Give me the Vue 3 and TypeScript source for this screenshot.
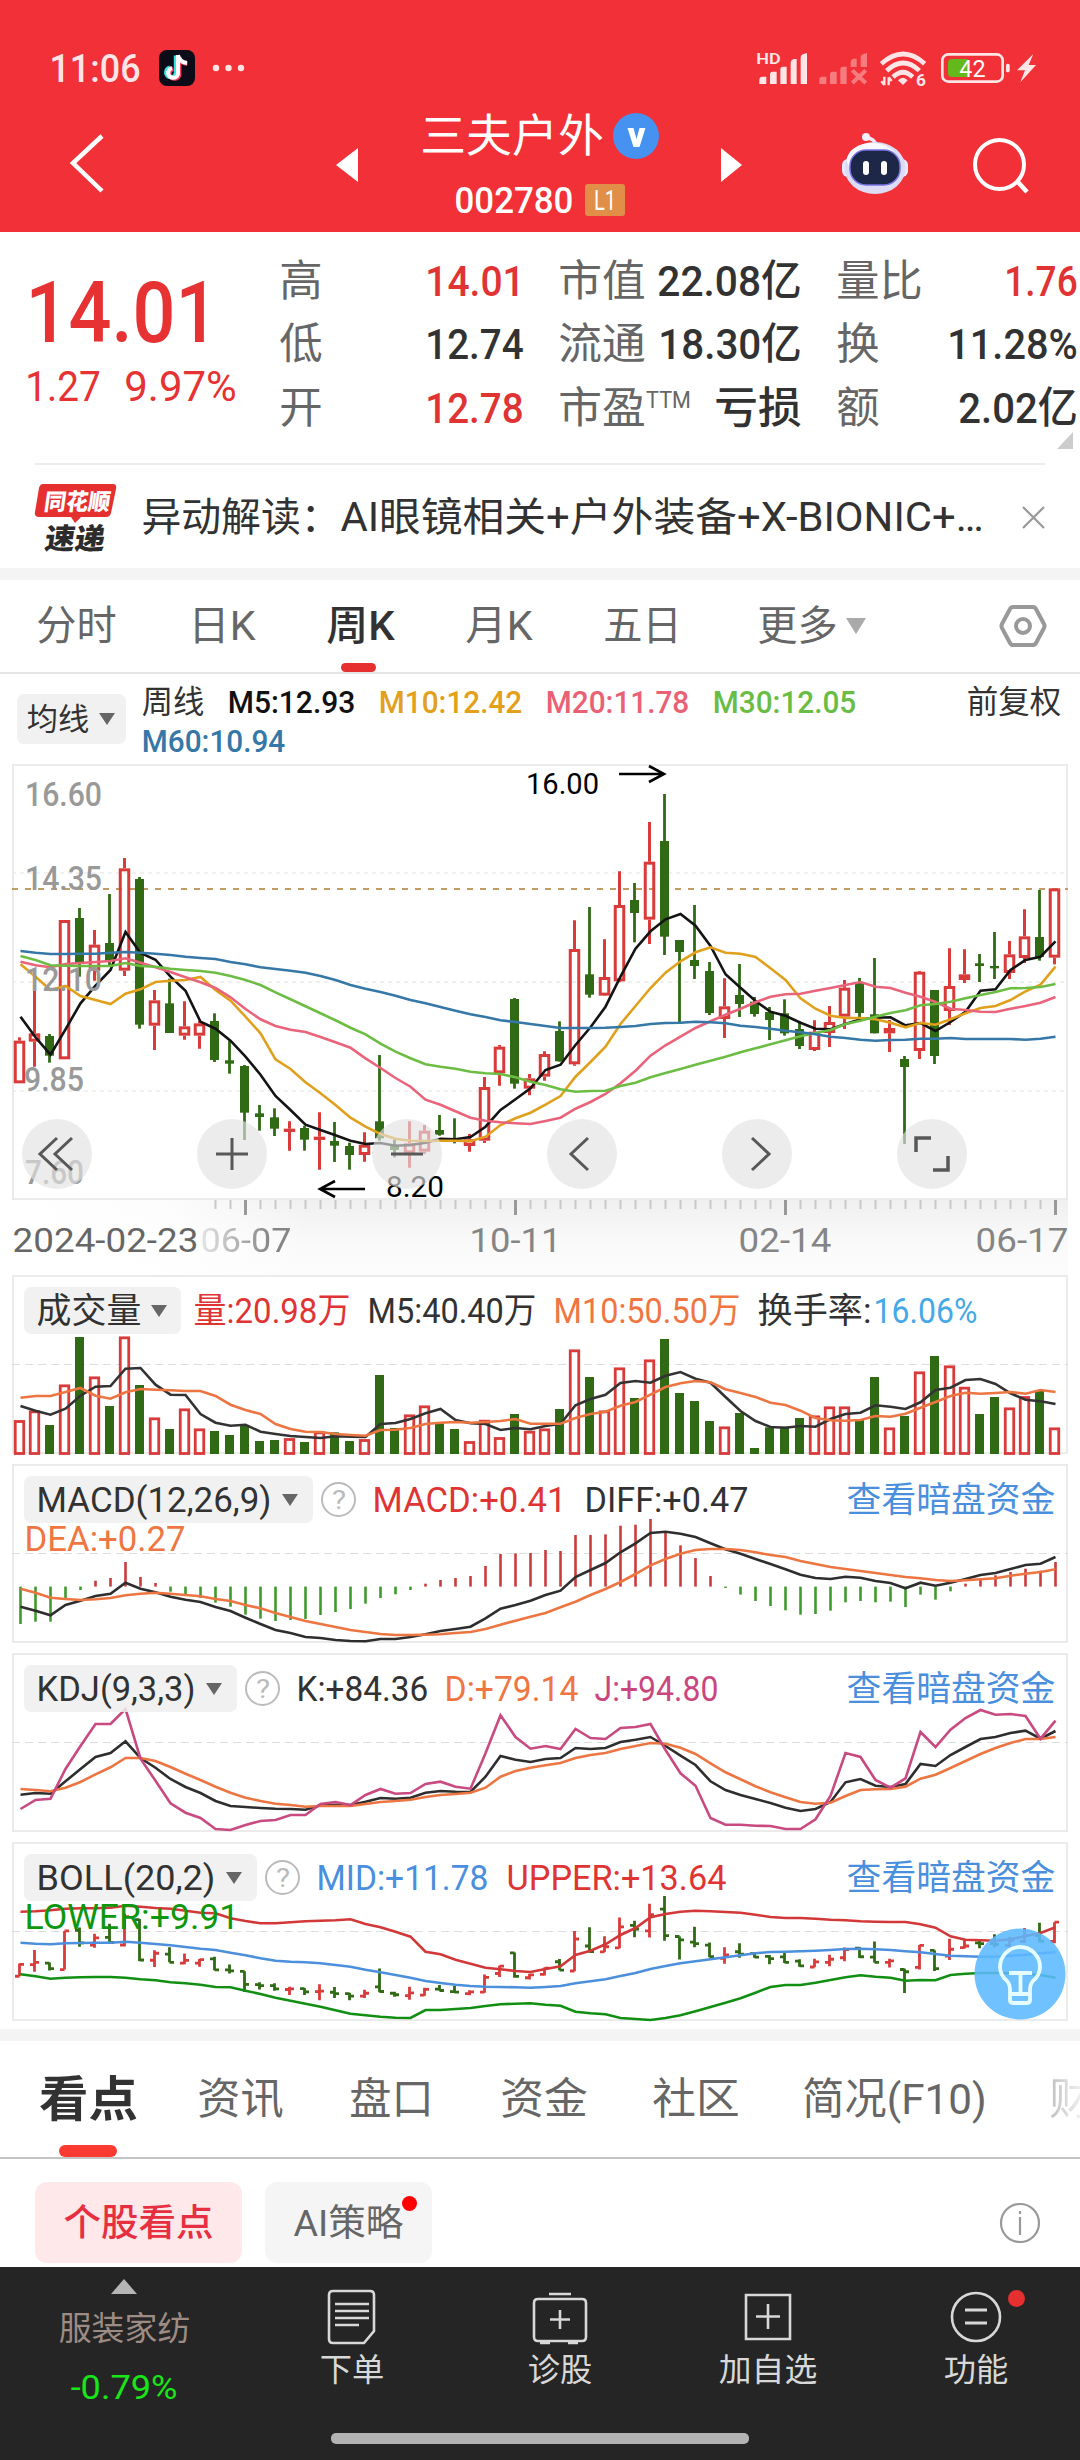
<script setup lang="ts">
import { h } from 'vue'
import type { FunctionalComponent } from 'vue'

interface FitProps { t: string; w: number; s: number; lead?: number; ht?: number }

// One line of text, condensed or widened to a given width; `lead` is the gap before it.
const Fit: FunctionalComponent<FitProps> = (p) => {
  const lead = p.lead ?? 0
  const ht = p.ht ?? 48
  const pad = p.s * 0.04
  return h('svg', { width: lead + p.w, height: ht, class: 'fit' }, [
    h('text', {
      x: lead - pad, y: ht / 2 + p.s * 0.348, 'font-size': p.s,
      textLength: p.w + pad * 2, lengthAdjust: 'spacingAndGlyphs', fill: 'currentColor',
    }, p.t),
  ])
}
Fit.props = ['t', 'w', 's', 'lead', 'ht'] as any

type Item = [string, number, number, number, string]
// Turns left edges and right edges into a run of items with leading gaps.
function row(start: number, items: Item[]) {
  let at = start
  return items.map(([t, x1, x2, s, c]) => {
    const o = { t, lead: x1 - at, w: x2 - x1, s, class: c }
    at = x2
    return o
  })
}

const quoteRows: Item[][] = [
  [['高', 281, 321, 43, 'lbl'], ['14.01', 427, 523, 43, 'up m'], ['市值', 560, 644, 43, 'lbl'], ['22.08亿', 659, 800, 43, 'ink m'], ['量比', 838, 921, 43, 'lbl'], ['1.76', 1006, 1076, 43, 'up m']],
  [['低', 281, 321, 43, 'lbl'], ['12.74', 427, 522, 43, 'ink m'], ['流通', 560, 644, 43, 'lbl'], ['18.30亿', 660, 800, 43, 'ink m'], ['换', 838, 878, 43, 'lbl'], ['11.28%', 949, 1076, 43, 'ink m']],
  [['开', 281, 321, 43, 'lbl'], ['12.78', 427, 522, 43, 'up m'], ['市盈', 560, 644, 43, 'lbl'], ['TTM', 647, 690, 23, 'lbl sup'], ['亏损', 716, 800, 43, 'ink m'], ['额', 838, 878, 43, 'lbl'], ['2.02亿', 960, 1076, 43, 'ink m']],
]
const periodTabs = row(0, [
  ['分时', 38, 115, 41, 'lbl'], ['日K', 190, 254, 41, 'lbl'], ['周K', 328, 393, 41, 'ink b'], ['月K', 467, 531, 41, 'lbl'],
  ['五日', 605, 680, 41, 'lbl'], ['更多', 759, 836, 41, 'lbl'],
])
const maRow = row(126, [
  ['周线', 143, 203, 32, 'ink'], ['M5:12.93', 229, 354, 32, 'black m'], ['M10:12.42', 380, 521, 32, 'gold m'],
  ['M20:11.78', 547, 688, 32, 'pink m'], ['M30:12.05', 714, 855, 32, 'lime m'], ['前复权', 968, 1060, 32, 'ink'],
])
const volRow = row(181, [
  ['量:20.98万', 195, 349, 35, 'up'], ['M5:40.40万', 369, 535, 35, 'ink'], ['M10:50.50万', 555, 739, 35, 'org'],
  ['换手率:', 759, 870, 35, 'ink'], ['16.06%', 875, 976, 35, 'sky'],
])
const macdRow = row(356, [['MACD:+0.41', 374, 565, 35, 'up'], ['DIFF:+0.47', 586, 747, 35, 'ink'], ['查看暗盘资金', 848, 1054, 35, 'link']])
const kdjRow = row(280, [['K:+84.36', 298, 427, 35, 'ink'], ['D:+79.14', 446, 577, 35, 'org'], ['J:+94.80', 596, 717, 35, 'mag'], ['查看暗盘资金', 848, 1054, 35, 'link']])
const bollRow = row(300, [['MID:+11.78', 318, 487, 35, 'blu'], ['UPPER:+13.64', 508, 725, 35, 'up'], ['查看暗盘资金', 848, 1054, 35, 'link']])
const infoTabs = row(0, [
  ['看点', 41, 136, 48, 'ink bb'], ['资讯', 199, 282, 43, 'lbl'], ['盘口', 351, 432, 43, 'lbl'], ['资金', 502, 586, 43, 'lbl'],
  ['社区', 654, 738, 43, 'lbl'], ['简况(F10)', 804, 985, 43, 'lbl'], ['财', 1051, 1091, 43, 'lbl fade'],
])
const dates = row(12, [
  ['2024-02-23', 14, 197, 34, 'day1'], ['06-07', 202, 290, 34, 'day dim'], ['10-11', 471, 560, 34, 'day'],
  ['02-14', 740, 830, 34, 'day'], ['06-17', 977, 1067, 34, 'day'],
])

// Vertical chart data is held in thirds of a pixel.
const X = (i: number) => 7.5 + 15 * i
const line = (a: number[], top: number) => a.map((v, i) => `${X(i) + 1},${((v - top) / 3).toFixed(1)}`).join(' ')

// high, low, body top, body bottom, volume top; a leading 1 marks a rising week
const raw: number[][] = [
  [1, 862, 1000, 872, 1000, 480], [1, 716, 950, 850, 875, 451], [0, 852, 938, 858, 917, 495], [1, 510, 928, 510, 928, 373], [0, 474, 680, 504, 640, 231],
  [1, 540, 692, 584, 662, 349], [0, 432, 650, 579, 635, 438], [1, 324, 678, 355, 662, 229], [0, 381, 836, 387, 824, 375], [1, 720, 900, 751, 827, 472],
  [0, 686, 849, 760, 849, 507], [1, 754, 869, 829, 857, 445], [1, 812, 896, 820, 857, 505], [0, 790, 936, 813, 930, 513], [0, 873, 971, 931, 941, 525],
  [0, 945, 1170, 948, 1088, 495], [0, 1065, 1142, 1090, 1101, 543], [0, 1075, 1158, 1102, 1136, 540], [1, 1114, 1202, 1136, 1143, 534], [0, 1127, 1202, 1134, 1169, 546],
  [1, 1087, 1259, 1160, 1167, 514], [0, 1116, 1236, 1173, 1187, 517], [0, 1178, 1259, 1188, 1215, 543], [1, 1147, 1235, 1184, 1215, 537], [0, 915, 1172, 1114, 1165, 345],
  [0, 1168, 1222, 1184, 1200, 504], [1, 1114, 1253, 1180, 1210, 463], [1, 1125, 1211, 1142, 1205, 436], [0, 1095, 1157, 1140, 1154, 490], [0, 1105, 1180, 1166, 1172, 507],
  [1, 1152, 1205, 1168, 1188, 543], [1, 981, 1179, 1011, 1172, 479], [1, 885, 1007, 890, 970, 531], [0, 744, 1016, 747, 1001, 462], [1, 972, 1036, 985, 1016, 512],
  [1, 904, 992, 912, 980, 505], [0, 814, 935, 843, 934, 447], [1, 511, 947, 597, 943, 268], [0, 471, 743, 673, 734, 351], [1, 568, 738, 681, 737, 451],
  [1, 364, 697, 465, 694, 322], [0, 399, 577, 450, 489, 414], [1, 216, 582, 335, 509, 298], [0, 132, 615, 273, 560, 237], [0, 570, 820, 570, 606, 399],
  [0, 465, 687, 630, 648, 423], [0, 636, 795, 663, 789, 483], [1, 685, 864, 769, 807, 499], [0, 642, 801, 735, 762, 459], [0, 741, 800, 755, 792, 564],
  [0, 771, 870, 786, 810, 502], [0, 748, 857, 790, 850, 500], [0, 815, 897, 837, 888, 474], [1, 811, 903, 845, 900, 466], [1, 768, 891, 816, 849, 439],
  [1, 690, 837, 713, 800, 439], [0, 684, 802, 697, 789, 480], [0, 624, 850, 793, 850, 351], [1, 810, 906, 834, 850, 502], [0, 918, 1182, 927, 951, 468],
  [1, 663, 927, 665, 903, 334], [0, 720, 942, 720, 918, 288], [1, 595, 825, 708, 783, 316], [1, 598, 699, 673, 690, 380], [0, 612, 696, 640, 648, 462],
  [0, 546, 687, 648, 655, 411], [1, 573, 687, 613, 669, 442], [1, 478, 639, 559, 624, 408], [0, 420, 632, 561, 621, 392], [1, 415, 643, 415, 623, 502],
]
const T = 42
const bars = raw.map(([u, hi, lo, a, b, v], i) => {
  const x = X(i)
  const B = (q: number) => ((768 + (q - 132) * 0.2774 - 606) / 3)
  const o = u ? b : a
  const c = u ? a : b
  return {
    x, up: !!u, hi: (hi - T) / 3, lo: (lo - T) / 3, a: (a - T) / 3, b: (b - T) / 3, v: (v - 45) / 3,
    ohlc: `M${x} ${B(hi)}V${B(lo)}M${x - 4.5} ${B(o)}H${x}M${x} ${B(c)}H${x + 4.5}`,
  }
})
const ma5 = [800,862,914,838,760,707,660,546,609,629,680,722,815,836,872,920,974,1038,1080,1124,1140,1156,1172,1182,1179,1187,1185,1178,1166,1168,1161,1130,1080,1048,1015,960,944,885,832,770,680,596,544,508,492,527,588,673,713,753,785,797,818,836,838,822,808,803,802,826,819,843,816,785,722,718,660,630,620,574]
const ma10 = [643,680,720,708,738,750,762,731,718,696,692,690,681,720,752,800,850,928,957,997,1030,1065,1103,1130,1152,1166,1172,1173,1172,1172,1174,1160,1125,1105,1088,1064,1038,980,936,890,822,768,714,668,634,607,592,608,611,621,655,690,745,776,797,804,804,808,818,832,819,824,808,790,774,768,750,724,704,650]
const ma20 = [635,646,652,642,639,636,633,625,638,652,666,682,697,714,742,777,808,828,839,846,861,877,893,925,954,984,1010,1049,1064,1084,1103,1112,1117,1120,1122,1113,1103,1076,1056,1032,1000,962,917,886,860,834,814,794,776,757,740,733,731,722,714,705,696,710,714,728,740,756,776,780,785,786,776,768,758,741]
const ma30 = [618,630,646,647,648,648,648,639,648,650,656,660,663,668,678,690,705,727,748,769,790,811,833,853,881,905,925,943,950,956,965,970,972,982,995,1005,1018,1025,1023,1022,1008,998,982,969,957,944,932,920,907,895,883,871,859,849,840,822,812,800,789,781,766,762,755,745,735,726,715,714,711,702]
const ma60 = [603,608,612,612,611,611,608,606,608,611,615,620,624,627,636,643,652,657,662,668,678,690,705,716,726,737,750,760,771,782,793,801,811,816,822,828,834,834,834,833,831,828,822,819,818,815,817,820,827,831,836,842,847,853,860,864,869,872,870,869,866,866,864,867,867,867,867,869,866,860]
const v5 = [438,452,464,446,407,380,378,326,324,374,404,405,462,488,497,494,515,522,528,531,534,529,530,531,492,489,477,460,447,480,490,492,510,504,508,498,491,436,417,404,369,363,368,347,336,356,368,411,453,483,501,503,498,500,477,462,458,436,440,447,427,390,383,360,357,372,400,419,424,432]
const v10 = [413,408,408,396,384,407,416,397,387,389,391,393,393,408,434,450,462,492,507,515,516,522,525,527,510,509,504,492,488,486,488,486,483,477,491,491,491,474,462,455,437,426,404,381,370,363,367,388,399,411,428,435,452,474,481,482,480,468,470,461,443,426,408,398,401,399,396,401,390,396]
const macd = [1092,1085,1085,1014,990,962,954,906,951,969,995,1006,1014,1028,1040,1064,1076,1083,1080,1077,1065,1056,1047,1031,1014,1003,990,971,960,954,948,918,882,880,879,870,873,825,825,823,797,794,777,817,856,894,948,984,1004,1023,1038,1051,1064,1062,1052,1027,1023,1027,1025,1041,1004,1019,994,971,958,946,936,926,932,906]
const diff = [1040,1052,1066,1035,1022,1008,1001,968,986,997,1010,1019,1026,1041,1053,1073,1092,1110,1119,1131,1134,1140,1143,1144,1137,1137,1131,1123,1113,1107,1100,1075,1046,1035,1022,1005,992,951,930,909,877,850,819,815,821,831,850,868,881,897,912,928,944,954,957,950,953,963,969,985,968,977,968,957,945,939,927,915,911,891]
const dea = [986,998,1013,1017,1020,1018,1014,1006,1001,998,1001,1005,1009,1017,1023,1035,1045,1059,1071,1083,1092,1101,1110,1116,1122,1125,1125,1124,1123,1119,1116,1107,1094,1082,1070,1059,1042,1025,1005,987,966,942,916,897,881,870,867,867,870,877,885,891,903,912,921,927,933,939,945,951,955,960,963,961,958,955,947,941,936,928]
const kk = [464,459,461,424,387,351,339,304,354,383,417,441,459,483,498,501,504,506,507,509,496,494,495,485,474,476,473,458,453,455,456,410,348,359,366,357,354,324,327,324,306,299,291,318,347,375,424,450,465,477,489,503,513,507,486,427,417,437,441,432,372,378,345,321,297,291,279,272,296,273]
const kd = [447,450,454,443,426,403,382,354,354,363,381,401,420,440,458,473,483,491,495,500,498,498,498,492,486,483,479,471,465,462,458,443,410,393,383,376,369,354,345,339,327,318,309,311,323,342,370,397,418,439,457,472,486,491,488,468,450,448,447,440,416,404,384,363,342,324,309,297,297,291]
const kj = [507,480,476,387,318,252,252,207,356,422,490,518,534,567,570,555,543,540,525,525,492,486,495,465,447,461,459,432,425,440,446,340,226,291,326,318,327,267,294,297,264,261,252,330,400,437,534,554,554,557,558,567,567,538,468,339,351,420,443,415,276,321,269,234,210,224,222,228,296,242]
const bm = [908,911,913,910,909,908,908,905,908,912,916,921,926,930,938,946,955,962,965,967,970,975,980,989,997,1005,1013,1023,1029,1034,1038,1040,1041,1042,1043,1041,1038,1030,1024,1018,1008,999,987,978,970,964,958,952,946,940,936,935,934,932,930,927,926,928,930,934,937,942,947,949,950,950,947,944,940,937]
const bu = [815,814,811,806,805,805,803,797,800,804,806,812,818,820,835,843,850,850,847,844,842,841,838,852,862,875,890,935,943,959,971,983,988,993,996,987,979,945,932,913,885,864,832,822,815,812,814,816,818,824,831,834,834,836,839,841,844,845,846,846,853,863,889,899,901,902,898,888,879,862]
const bl = [1003,1009,1016,1013,1012,1011,1011,1013,1018,1021,1027,1030,1034,1041,1042,1052,1062,1073,1082,1091,1100,1111,1121,1126,1130,1133,1134,1110,1110,1107,1104,1098,1093,1091,1090,1094,1097,1115,1120,1123,1134,1137,1140,1134,1126,1114,1101,1088,1075,1058,1041,1035,1035,1028,1020,1012,1006,1010,1013,1022,1020,1021,1005,1001,999,999,1000,1002,1005,1013]

const maLines = [
  { p: line(ma5, T), c: '#141414' }, { p: line(ma10, T), c: '#e0a01c' }, { p: line(ma20, T), c: '#e9637a' },
  { p: line(ma30, T), c: '#6dbd45' }, { p: line(ma60, T), c: '#3577a6' },
]
const ticks = raw.map((_, i) => i).filter((i) => i > 12)
const RED = '#d93a3a'
const GREEN = '#306a14'
</script>

<template>
  <div class="page">
    <header class="top">
      <div class="status">
        <Fit t="11:06" :w="88" :s="39" :lead="51" class="clock m" />
        <svg class="tok" width="36" height="36" viewBox="0 0 36 36">
          <rect width="36" height="36" rx="8" fill="#0c0c18" />
          <g fill="none" stroke-width="4">
            <path d="M18 6V24a5 5 0 1 1-6-6M18 6q1 6 8 7" stroke="#35e3df" transform="translate(-1.2 -.6)" />
            <path d="M19 6V24a5 5 0 1 1-6-6M19 6q1 6 8 7" stroke="#f5385c" transform="translate(1.4 1)" />
            <path d="M19 5V24a5 5 0 1 1-6-6M19 5q1 7 9 8" stroke="#fff" />
          </g>
        </svg>
        <svg width="36" height="36"><g fill="#ffe3e3"><circle cx="8" cy="18" r="3.200" /><circle cx="20.500" cy="18" r="3.200" /><circle cx="33" cy="18" r="3.200" /></g></svg>
        <svg class="sys" width="304" height="56" viewBox="0 0 912 168">
          <g fill="#ffe6e6">
            <text x="49" y="71" font-size="45" font-weight="600" textLength="73" lengthAdjust="spacingAndGlyphs">HD</text>
            <path d="M58 119a9 9 0 0 1 9-9h12v22H58zM90 103q0-8 8-8h12v37H90zM121 88q0-8 8-8h11v52h-19zM152 69q0-9 9-12h9v75h-18zM182 54q0-10 9-12l10-3v93h-19z" />
            <g opacity=".42">
              <path d="M238 119a9 9 0 0 1 9-9h12v22h-21zM270 103q0-8 8-8h12v37h-20zM301 88q0-8 8-8h11v52h-19zM332 66q0-8 8-10h10v25h-18zM362 52q0-8 9-10l10-3v42h-19z" />
              <path d="M337 91l40 38M377 91l-40 38" stroke="#ffe6e6" stroke-width="12" />
            </g>
            <g fill="none" stroke="#ffe6e6" stroke-width="14">
              <path d="M424 71Q490 13 554 71" /><path d="M440 92Q490 46 538 92" /><path d="M459 111Q489 82 518 111" />
            </g>
            <path d="M474 121q15-16 29 0l-14 14z" />
            <path d="M433 110v26M446 112v24M424 124l9 11M455 123l-9-11" fill="none" stroke="#ffe6e6" stroke-width="7" />
            <text x="528" y="138" font-size="52" font-weight="700">6</text>
            <rect x="607" y="43" width="181" height="82" rx="18" fill="none" stroke="#ffe6e6" stroke-width="8" />
            <path d="M636 57h46v54h-46q-12 0-12-12V69q0-12 12-12z" fill="#63b81b" />
            <text x="658" y="110" font-size="70" textLength="79" lengthAdjust="spacingAndGlyphs" fill="#fff">42</text>
            <rect x="798" y="71" width="11" height="26" rx="5" />
            <path d="M880 42l-49 49h24l-14 36 47-52h-22z" />
          </g>
        </svg>
      </div>
      <div class="nav">
        <svg width="400" height="128" viewBox="0 104 400 128">
          <path d="M102 136L73 163l29 28" fill="none" stroke="#fff" stroke-width="4.500" />
          <path d="M336 165l22-17v34z" fill="#fff" />
        </svg>
        <div class="name">
          <div class="line">
            <Fit t="三夫户外" :w="180" :s="45" :lead="22" :ht="64" />
            <svg class="vip" width="46" height="46" viewBox="0 0 46 46"><circle cx="23" cy="23" r="23" fill="#4592f0" /><path d="M14.500 15h6l3 11 3-11h6l-6 19h-6z" fill="#fff" /></svg>
          </div>
          <div class="line">
            <Fit t="002780" :w="116" :s="36" :lead="56" :ht="64" class="m" />
            <span class="lvl"><Fit t="L1" :w="20" :s="28" :ht="32" /></span>
          </div>
        </div>
        <svg width="390" height="128" viewBox="690 104 390 128">
          <path d="M742 165l-21-17v34z" fill="#fff" />
          <path d="M866 138q9 0 10 8" fill="none" stroke="#f5e9f8" stroke-width="3.500" /><circle cx="866" cy="137" r="4" fill="#f7effa" />
          <rect x="842" y="159" width="66" height="18" rx="6" fill="#efeaff" />
          <ellipse cx="875" cy="168" rx="30.500" ry="26" fill="#dddcf7" />
          <ellipse cx="872" cy="160" rx="25" ry="17" fill="#faf8ff" />
          <rect x="850" y="150" width="50" height="35" rx="16" fill="#1d2849" stroke="#7772e4" stroke-width="1.500" />
          <rect x="863" y="161" width="6" height="14" rx="3" fill="#fff" /><rect x="881" y="161" width="6" height="14" rx="3" fill="#fff" />
          <circle cx="999.500" cy="164.500" r="24.500" fill="none" stroke="#fff" stroke-width="4" />
          <path d="M1017 181l10 11" stroke="#fff" stroke-width="4.500" />
        </svg>
      </div>
    </header>

    <section class="quote">
      <div class="price">
        <Fit t="14.01" :w="186" :s="86" :lead="29" :ht="110" class="m" />
        <div class="line"><Fit t="1.27" :w="72" :s="43" :lead="27" :ht="38" /><Fit t="9.97%" :w="109" :s="43" :lead="27" :ht="38" /></div>
      </div>
      <div class="facts">
        <div v-for="(r, n) in quoteRows" :key="n" class="fact"><Fit v-for="it in row(260, r)" :key="it.t" v-bind="it" /></div>
      </div>
      <svg class="corner" width="16" height="17"><path d="M16 0v17H0z" fill="#ccc" /></svg>
    </section>
    <section class="news">
      <svg width="82" height="68" viewBox="0 0 82 68">
        <path d="M8 1h70q4 0 3 5l-5 24q-1 4-5 4H46l-6 6-4-6H4q-5 0-4-5L4 5q1-4 4-4z" fill="#e63030" />
        <g transform="skewX(-8)" font-weight="900">
          <text x="12" y="27" font-size="23" textLength="66" lengthAdjust="spacingAndGlyphs" fill="#fff">同花顺</text>
          <text x="18" y="66" font-size="29" textLength="60" lengthAdjust="spacingAndGlyphs" fill="#2c2c2c">速递</text>
        </g>
      </svg>
      <Fit t="异动解读：" :w="196" :s="40" :lead="26" :ht="62" class="ink" />
      <Fit t="AI眼镜相关+户外装备+X-BIONIC+…" :w="640" :s="40" :lead="3" :ht="62" class="ink" />
      <svg width="62" height="30"><path d="M41 5l21 21M62 5L41 26" stroke="#999" stroke-width="2.200" /></svg>
    </section>
    <div class="band"></div>

    <nav class="periods">
      <Fit v-for="it in periodTabs" :key="it.t" v-bind="it" />
      <svg width="40" height="24"><path d="M10 4h20l-10 16z" fill="#aaa" /></svg>
      <svg class="hex" width="46" height="46" viewBox="0 0 46 46" fill="none" stroke="#999" stroke-width="4"><path d="M13 4h20q2 0 3 2l8 15q1 2 0 4l-8 15q-1 2-3 2H13q-2 0-3-2L2 25q-1-2 0-4l8-15q1-2 3-2z" /><circle cx="23" cy="23" r="7" /></svg>
      <i class="mark"></i>
    </nav>

    <div class="averages">
      <span class="chip pick"><Fit t="均线" :w="60" :s="31" :lead="11" /><svg width="28" height="14"><path d="M11 1h16l-8 12z" fill="#666" /></svg></span>
      <div>
        <div class="line avg"><Fit v-for="it in maRow" :key="it.t" v-bind="it" :ht="39" /></div>
        <div class="line avg"><Fit t="M60:10.94" :w="141" :s="32" :lead="17" :ht="39" class="steel m" /></div>
      </div>
    </div>

    <div class="charts">
      <div class="main">
        <svg width="1056" height="511">
          <defs>
            <linearGradient id="shade" x1="0" y1="0" x2="0" y2="1"><stop offset="0" stop-color="#f0f0f0" /><stop offset=".6" stop-color="#fafafa" /><stop offset="1" stop-color="#fcfcfc" /></linearGradient>
            <linearGradient id="veil"><stop offset="0" stop-color="#fff" /><stop offset=".5" stop-color="#fff" stop-opacity=".85" /><stop offset="1" stop-color="#fff" stop-opacity="0" /></linearGradient>
          </defs>
          <rect y="436" width="1056" height="75" fill="url(#shade)" />
          <rect y="436" width="300" height="75" fill="url(#veil)" />
          <rect x="1" y="1" width="1054" height="434" fill="#fff" stroke="#ebebeb" stroke-width="2" />
          <path d="M0 109H1056M0 218H1056M0 327H1056" stroke="#ebebeb" stroke-width="1.500" stroke-dasharray="4 4" />
          <path d="M0 125H1056" stroke="#c29c62" stroke-width="2" stroke-dasharray="6 7" />
          <g v-for="(b, i) in bars" :key="i">
            <template v-if="b.up">
              <path :d="`M${b.x} ${b.hi}V${b.a}M${b.x} ${b.b}V${b.lo}`" :stroke="RED" stroke-width="3" />
              <rect :x="b.x - 4.25" :y="b.a + 1.5" width="8.500" :height="Math.max(b.b - b.a - 3, 0.3)" fill="none" :stroke="RED" stroke-width="3" />
            </template>
            <template v-else>
              <path :d="`M${b.x} ${b.hi}V${b.lo}`" :stroke="GREEN" stroke-width="2.800" />
              <rect :x="b.x - 4.5" :y="b.a" width="9" :height="b.b - b.a" :fill="GREEN" />
            </template>
          </g>
          <polyline v-for="l in maLines" :key="l.c" :points="l.p" fill="none" :stroke="l.c" stroke-width="2.600" />
          <path v-for="i in ticks" :key="i" :d="`M${X(i) + 1} 436v${i % 18 === 15 ? 15 : 9}`" :stroke="i % 18 === 15 ? '#999' : '#c8c8c8'" :stroke-width="i % 18 === 15 ? 3 : 2" />
          <g fill="#999" font-size="34" font-weight="500">
            <text x="13" y="42" textLength="77" lengthAdjust="spacingAndGlyphs">16.60</text>
            <text x="13" y="126" textLength="77" lengthAdjust="spacingAndGlyphs">14.35</text>
            <text x="13" y="227" textLength="77" lengthAdjust="spacingAndGlyphs">12.10</text>
            <text x="12" y="327" textLength="60" lengthAdjust="spacingAndGlyphs">9.85</text>
            <text x="13" y="420" textLength="59" lengthAdjust="spacingAndGlyphs">7.60</text>
          </g>
          <g fill="#000" font-size="30">
            <text x="514" y="30" textLength="73" lengthAdjust="spacingAndGlyphs">16.00</text>
            <text x="374" y="433" textLength="58" lengthAdjust="spacingAndGlyphs">8.20</text>
          </g>
          <path d="M607 10h45M637 2l15 8-15 8M353 425h-45M323 417l-15 8 15 8" fill="none" stroke="#000" stroke-width="2.600" />
          <g fill="rgba(226,226,226,.65)"><circle v-for="n in 6" :key="n" :cx="45 + (n - 1) * 175" cy="390" r="35" /></g>
          <g fill="none" stroke="#585858" stroke-width="3">
            <path d="M45 374L28 390l17 16M60 374L43 390l17 16M204 390h32M220 374v32M379 390h32" />
            <path d="M576 374l-17 16 17 16M740 374l17 16-17 16" />
            <path d="M904 388v-14h15M936 392v14h-15" stroke-width="3.500" />
          </g>
        </svg>
        <div class="line days"><Fit v-for="it in dates" :key="it.t" v-bind="it" /></div>
      </div>

      <div class="panel">
        <svg class="plot" width="1056" height="180">
          <rect x="1" y="1" width="1054" height="177" fill="none" stroke="#ebebeb" stroke-width="2" />
          <path d="M0 89.500H1056" stroke="#ddd" stroke-dasharray="8 5" />
          <template v-for="(b, i) in bars" :key="i">
            <rect v-if="b.up" :x="b.x - 4.25" :y="b.v + 1.5" width="8.500" :height="177 - b.v" fill="#fff" :stroke="RED" stroke-width="2.800" />
            <rect v-else :x="b.x - 4.5" :y="b.v" width="9" :height="179 - b.v" :fill="GREEN" />
          </template>
          <polyline :points="line(v5, 45)" class="pl" stroke="#333" /><polyline :points="line(v10, 45)" class="pl" stroke="#ec7541" />
        </svg>
        <div class="head">
          <span class="chip"><Fit t="成交量" :w="102" :s="35" :lead="14" /><svg width="41" height="14"><path d="M11 1h16l-8 12z" fill="#666" /></svg></span>
          <Fit v-for="it in volRow" :key="it.t" v-bind="it" />
        </div>
      </div>

      <div class="panel">
        <svg class="plot" width="1056" height="181">
          <rect x="1" y="1" width="1054" height="177" fill="none" stroke="#ebebeb" stroke-width="2" />
          <path d="M0 89.500H1056" stroke="#ddd" stroke-dasharray="8 5" />
          <path v-for="(v, i) in macd" :key="i" :d="`M${X(i) + 1} 122.600V${(v - 612) / 3}`" :stroke="v < 980 ? '#cb3b3b' : '#3f9a2c'" stroke-width="2.600" />
          <polyline :points="line(diff, 612)" class="pl" stroke="#2e2e2e" /><polyline :points="line(dea, 612)" class="pl" stroke="#ec7541" />
        </svg>
        <div class="head">
          <span class="chip"><Fit t="MACD(12,26,9)" :w="232" :s="35" :lead="14" /><svg width="43" height="14"><path d="M12 1h16l-8 12z" fill="#666" /></svg></span>
          <span class="help"><Fit t="?" :w="12" :s="26" :ht="31" /></span>
          <Fit v-for="it in macdRow" :key="it.t" v-bind="it" />
        </div>
        <div class="line second"><Fit t="DEA:+0.27" :w="158" :s="35" :lead="14" :ht="31" class="org" /></div>
      </div>

      <div class="panel">
        <svg class="plot" width="1056" height="181">
          <rect x="1" y="1" width="1054" height="177" fill="none" stroke="#ebebeb" stroke-width="2" />
          <path d="M0 89.500H1056" stroke="#ddd" stroke-dasharray="8 5" />
          <polyline :points="line(kk, 39)" class="pl" stroke="#2e2e2e" /><polyline :points="line(kd, 39)" class="pl" stroke="#ec7541" /><polyline :points="line(kj, 39)" class="pl" stroke="#c84a80" />
        </svg>
        <div class="head">
          <span class="chip"><Fit t="KDJ(9,3,3)" :w="156" :s="35" :lead="14" /><svg width="43" height="14"><path d="M12 1h16l-8 12z" fill="#666" /></svg></span>
          <span class="help"><Fit t="?" :w="12" :s="26" :ht="31" /></span>
          <Fit v-for="it in kdjRow" :key="it.t" v-bind="it" />
        </div>
      </div>

      <div class="panel">
        <svg class="plot" width="1056" height="181">
          <rect x="1" y="1" width="1054" height="177" fill="none" stroke="#ebebeb" stroke-width="2" />
          <path d="M0 89.500H1056" stroke="#ddd" stroke-dasharray="8 5" />
          <path v-for="(b, i) in bars" :key="i" :d="b.ohlc" fill="none" :stroke="b.up ? RED : GREEN" stroke-width="2.800" />
          <polyline :points="line(bm, 606)" class="pl" stroke="#4c8fdc" /><polyline :points="line(bu, 606)" class="pl" stroke="#d23838" /><polyline :points="line(bl, 606)" class="pl" stroke="#128f12" />
        </svg>
        <div class="head">
          <span class="chip"><Fit t="BOLL(20,2)" :w="176" :s="35" :lead="14" /><svg width="43" height="14"><path d="M12 1h16l-8 12z" fill="#666" /></svg></span>
          <span class="help"><Fit t="?" :w="12" :s="26" :ht="31" /></span>
          <Fit v-for="it in bollRow" :key="it.t" v-bind="it" />
        </div>
        <div class="line second"><Fit t="LOWER:+9.91" :w="212" :s="35" :lead="14" :ht="31" class="grn" /></div>
        <svg class="bulb" width="92" height="92" viewBox="0 0 92 92">
          <circle cx="46" cy="46" r="45.500" fill="#5cb8ff" fill-opacity=".88" />
          <g fill="none" stroke="#e6fdff" stroke-width="3.800">
            <path d="M36 62q0-6-3-9-7-6-7-14a20 20 0 0 1 40 0q0 8-7 14-3 3-3 9v10q0 3-3 3H39q-3 0-3-3zM37 66h19M35 45h23M46.500 45v21" />
          </g>
        </svg>
      </div>
    </div>
    <div class="band"></div>

    <nav class="tabs">
      <Fit v-for="it in infoTabs" :key="it.t" v-bind="it" />
      <i class="mark2"></i>
    </nav>
    <div class="pills">
      <span class="pill on"><Fit t="个股看点" :w="147" :s="37" :lead="30" /></span>
      <span class="pill"><Fit t="AI策略" :w="107" :s="37" :lead="30" /><i class="dot"></i></span>
      <svg class="info" width="42" height="42" fill="none" stroke="#999" stroke-width="2.200"><circle cx="21" cy="21" r="19" /><path d="M21 15v18M21 9v3" /></svg>
    </div>

    <footer class="bottom">
      <div class="sector">
        <svg width="26" height="15"><path d="M0 15L13 0l13 15z" fill="#b5b5b5" /></svg>
        <Fit t="服装家纺" :w="129" :s="32.5" :ht="70" />
        <Fit t="-0.79%" :w="104" :s="34" :ht="46" class="neon" />
      </div>
      <div class="act">
        <svg width="60" height="60" viewBox="0 0 60 60"><path d="M11 5h37q4 0 4 4v36L42 57H11q-4 0-4-4V9q0-4 4-4zM13 18h34M13 25h34M13 32h34M13 39h24" /></svg>
        <Fit t="下单" :w="62" :s="32" />
      </div>
      <div class="act">
        <svg width="60" height="60" viewBox="0 0 60 60"><path d="M8 13h44q4 0 4 4v34q0 4-4 4H8q-4 0-4-4V17q0-4 4-4zM19 8h22M30 24v19M20 33.500h20M10 57h10M38 57h10" /></svg>
        <Fit t="诊股" :w="62" :s="32" />
      </div>
      <div class="act">
        <svg width="60" height="60" viewBox="0 0 60 60"><path d="M8 9h44v44H8zM30 18v25M18 30.500h24" /></svg>
        <Fit t="加自选" :w="96" :s="32" />
      </div>
      <div class="act">
        <svg width="60" height="60" viewBox="0 0 60 60"><circle cx="30" cy="31" r="24" /><path d="M19 24h22M19 37h22" stroke-width="3" /></svg>
        <Fit t="功能" :w="62" :s="32" />
        <i class="alert"></i>
      </div>
      <i class="home"></i>
    </footer>
  </div>
</template>

<style>
body { margin: 0; background: #fff; }
</style>

<style scoped>
.page { width: 1080px; height: 2460px; overflow: hidden; background: #fff; font-family: Roboto, "Noto Sans CJK SC", sans-serif; display: flex; flex-direction: column; }
.page > * { flex: none; box-sizing: border-box; }
svg { display: block; flex: none; overflow: visible; }
.fit { display: block; flex: none; overflow: visible; }
i { display: block; }
.line { display: flex; align-items: center; }
.m { font-weight: 500; }
.b { font-weight: 500; }
.bb { font-weight: 700; }
.ink { color: #323232; }
.lbl { color: #666; }
.up { color: #e03434; }
.black { color: #111; }
.gold { color: #e3a01b; }
.pink { color: #ea6176; }
.lime { color: #69bd45; }
.steel { color: #3577a6; }
.org { color: #ef7642; }
.sky { color: #46a9e6; }
.link, .blu { color: #4a8fdd; }
.mag { color: #c9467f; }
.grn { color: #0d970d; }

.top { height: 232px; background: #f23037; color: #fff; }
.status { height: 72px; padding-top: 32px; display: flex; align-items: center; }
.clock { color: #ffe6e6; }
.tok { margin: 0 13px 0 20px; }
.sys { margin-left: auto; margin-right: 36px; }
.nav { display: flex; height: 128px; }
.name { width: 290px; }
.vip { margin-left: 11px; }
.lvl { display: flex; justify-content: center; width: 40px; height: 32px; margin-left: 13px; border-radius: 3px; background: #e18e49; }

.quote { height: 231px; display: flex; position: relative; }
.price { width: 260px; padding-top: 25px; color: #e63232; }
.facts { padding-top: 17px; }
.fact { display: flex; align-items: center; height: 63.500px; }
.sup { margin-bottom: 15px; }
.corner { position: absolute; right: 7px; bottom: 14px; }
.news { height: 105px; margin: 0 35px; border-top: 2px solid #ececec; display: flex; align-items: center; }
.band { height: 12px; background: #f4f4f4; }

.periods { height: 94px; border-bottom: 2px solid #e6e6e6; display: flex; align-items: center; position: relative; }
.hex { margin-left: auto; margin-right: 34px; }
.mark { position: absolute; left: 341px; bottom: 0; width: 35px; height: 9px; border-radius: 5px; background: #e63030; }

.averages { height: 90px; padding-left: 17px; display: flex; align-items: flex-start; }
.chip { display: flex; align-items: center; height: 47px; border-radius: 7px; background: rgba(238, 238, 238, .85); color: #323232; }
.pick { margin-top: 20px; height: 50px; width: 109px; }
.avg:first-child { padding-top: 8px; }

.charts { padding: 0 12px; height: 1265px; }
.main { height: 511px; position: relative; }
.days { position: absolute; left: 0; top: 452px; }
.day { color: #858585; }
.day1 { color: #666; }
.dim { -webkit-mask-image: linear-gradient(90deg, rgba(0, 0, 0, .15), #000 80%); mask-image: linear-gradient(90deg, rgba(0, 0, 0, .15), #000 80%); }
.panel { height: 179px; margin-bottom: 10px; position: relative; }
.plot { position: absolute; left: 0; top: 0; }
.pl { fill: none; stroke-width: 2.600; }
.head { position: relative; display: flex; align-items: center; padding: 12px 0 0 12px; height: 47px; }
.help { display: flex; justify-content: center; box-sizing: border-box; width: 35px; height: 35px; margin-left: 8px; border: 2px solid #bbb; border-radius: 50%; color: #bbb; }
.second { position: relative; }
.bulb { position: absolute; left: 962px; top: 86px; }

.tabs { height: 118px; border-bottom: 2px solid #c4c4c4; display: flex; align-items: center; position: relative; overflow: hidden; }
.fade { -webkit-mask-image: linear-gradient(90deg, transparent 50%, rgba(0, 0, 0, .4) 62%, transparent 100%); mask-image: linear-gradient(90deg, transparent 50%, rgba(0, 0, 0, .4) 62%, transparent 100%); }
.mark2 { position: absolute; left: 59px; bottom: 0; width: 58px; height: 12px; border-radius: 6px; background: #fb3b31; }
.pills { height: 108px; padding: 23px 39px 4px 35px; display: flex; }
.pill { position: relative; display: flex; align-items: center; width: 167px; height: 81px; border-radius: 12px; background: #f5f5f5; color: #666; }
.on { width: 207px; margin-right: 23px; background: #fee8ea; color: #e62f40; font-weight: 500; }
.dot { position: absolute; right: 15px; top: 14px; width: 15px; height: 15px; border-radius: 50%; background: #f00; }
.info { margin: 20px 0 0 auto; }

.bottom { height: 193px; background: #252525; display: flex; position: relative; color: #d8d8d8; }
.sector { width: 248px; padding-top: 12px; display: flex; flex-direction: column; align-items: center; color: #9c8c84; }
.neon { color: #19e619; }
.act { width: 208px; padding-top: 19px; display: flex; flex-direction: column; align-items: center; position: relative; }
.act svg:first-child { fill: none; stroke: #d8d8d8; stroke-width: 2.600; }
.alert { position: absolute; right: 55px; top: 23px; width: 17px; height: 17px; border-radius: 50%; background: #e63030; }
.home { position: absolute; left: 331px; bottom: 16px; width: 418px; height: 11px; border-radius: 5px; background: #b3b3b3; }
</style>
